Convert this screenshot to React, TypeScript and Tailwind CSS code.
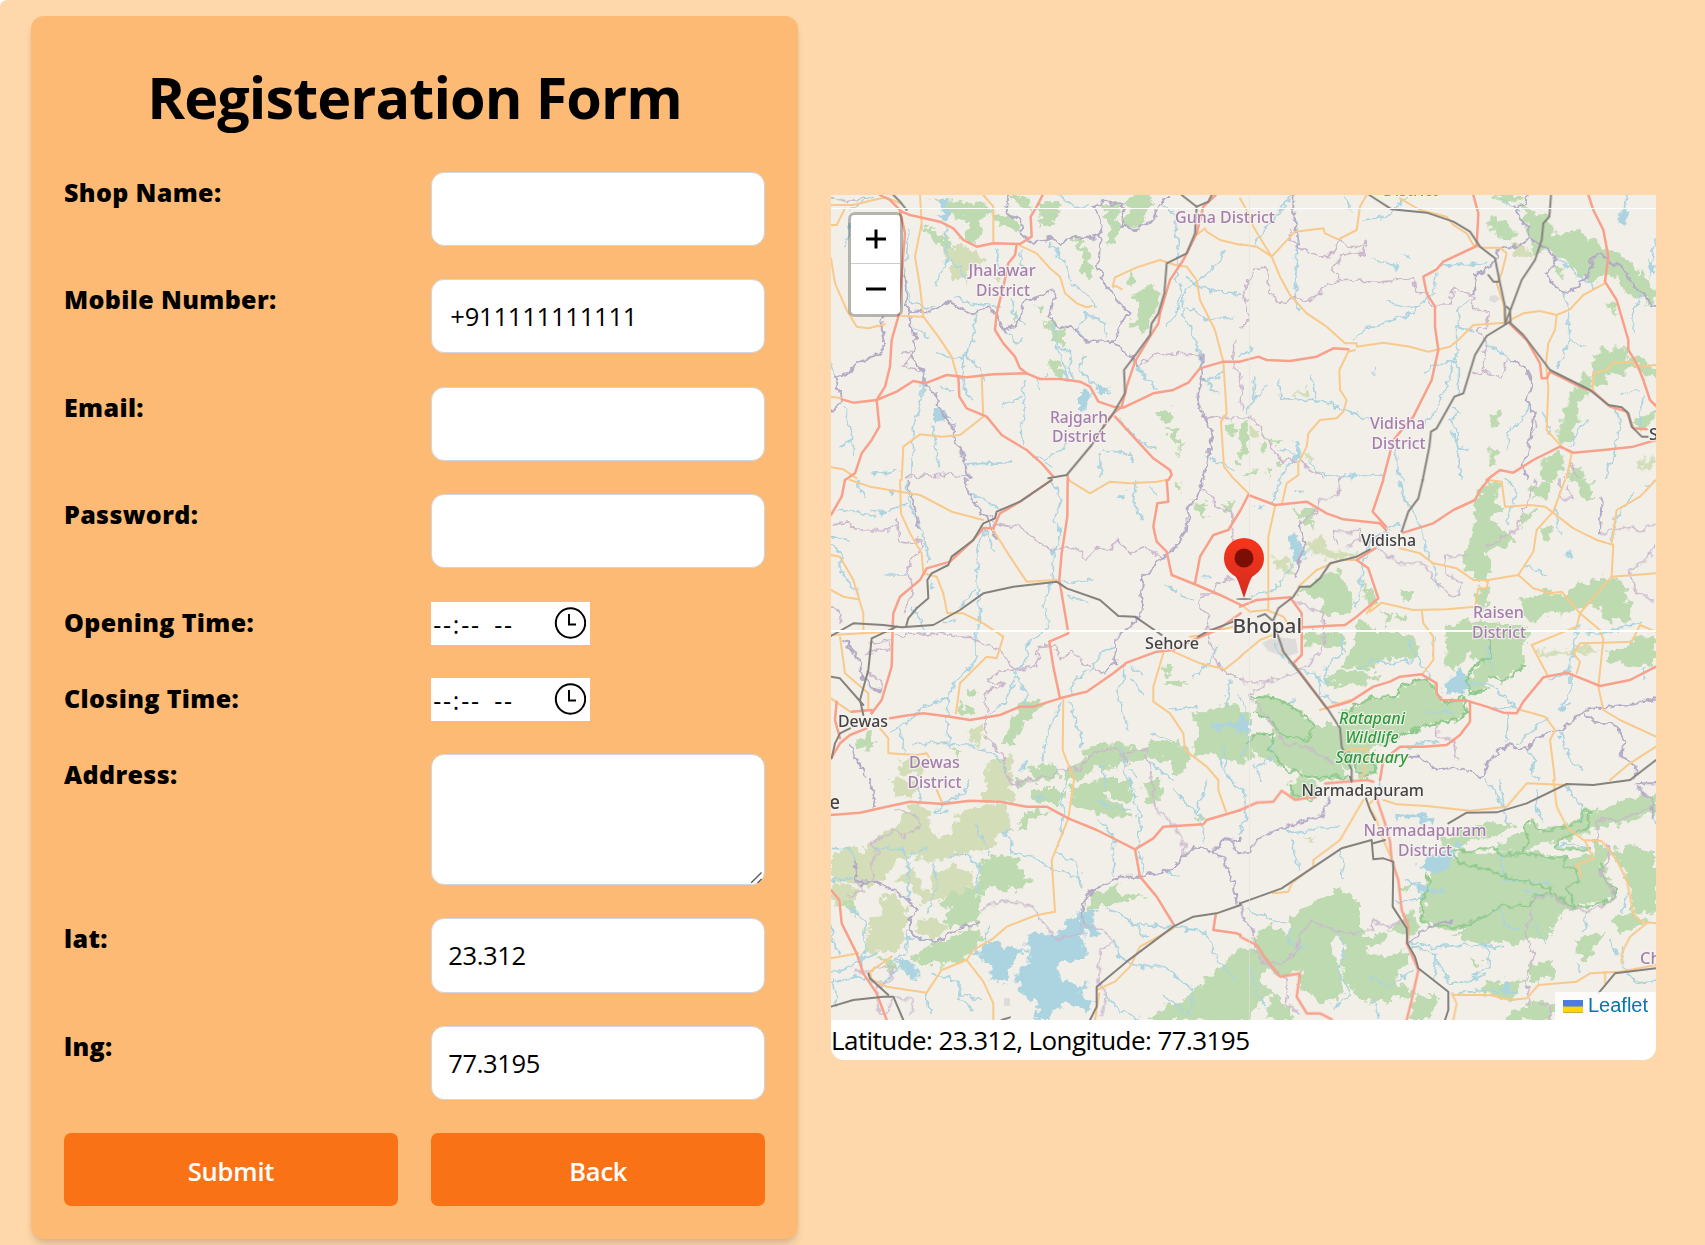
import React from "react";

type Panel = "A" | "B" | "C" | "D" | "E" | "F";
type Features = Record<Panel, string[]>;

// The map is drawn in six sheets, each with three drawing units per pixel.
const origin: Record<Panel, string> = {
  A: "translate(820 180) scale(.33333)",
  B: "translate(1240 180) scale(.33333)",
  C: "translate(820 480) scale(.33333)",
  D: "translate(1240 480) scale(.33333)",
  E: "translate(820 780) scale(.33333)",
  F: "translate(1240 780) scale(.33333)",
};

const forest: Features = {
  A: [
    "330,45 360,60 410,62 500,75 520,100 475,125 490,150 460,190 425,170 445,130 400,105 370,80",
    "520,105 560,98 610,140 600,160 560,140 525,130", "570,45 620,45 638,90 605,88",
    "650,80 700,60 722,90 700,145 655,130 665,105", "300,130 345,150 395,190 385,212 325,172",
    "845,65 900,70 895,170 870,205 858,195 875,140 850,95", "930,45 992,45 985,95 950,155 912,130 925,85",
    "755,170 785,175 800,215 830,270 800,298 780,270 788,220", "925,265 945,290 940,330 925,300",
    "940,345 1000,310 1020,350 975,460 925,445 950,410", "665,420 735,450 735,490 700,485 695,450",
    "688,540 715,550 728,595 690,585", "645,370 675,380 660,408", "1010,700 1050,685 1060,715 1030,730",
    "1040,750 1075,740 1080,785 1098,795 1080,800 1072,830 1065,790", "570,410 590,400 585,425",
    "1215,735 1245,730 1250,760 1230,765", "1252,740 1275,725 1285,780 1280,830 1255,840 1262,800", "1325,785 1345,800 1325,820", "1345,770 1390,785 1370,795",
    "1245,850 1262,845 1255,870", "1270,880 1310,865 1300,890", "1345,860 1362,870 1342,892", "1385,835 1395,850 1375,858",
  ],
  B: [
    "745,45 850,48 850,65 800,70", "745,105 800,125 830,150 825,180 780,175 750,150",
    "840,70 880,95 930,110 940,165 1000,150 1050,170 1115,215 1180,255 1248,330 1248,380 1200,350 1160,340 1120,280 1090,290 1060,310 1020,290 960,240 940,210 880,225 860,140",
    "930,262 975,260 960,290", "1095,380 1120,370 1140,410", "1060,530 1090,500 1110,515 1150,490 1160,530 1200,525 1248,580 1248,600 1180,560 1150,590 1110,570 1100,620 1060,610",
    "1030,570 1055,590 1050,650 1015,665 1010,740 975,800 950,770 980,670", "1248,690 1180,725 1200,750 1248,720",
    "745,705 780,695 785,730 755,745", "750,800 770,805 765,855 748,860", "910,830 970,810 975,850 940,900 895,900",
    "990,860 1040,880 1030,900 990,900",
  ],
  C: [
    "1105,50 1130,75 1165,65 1150,85 1165,115 1150,110", "1205,75 1240,60 1230,95 1215,90", "1065,5 1085,10 1080,30 1065,20", "1025,560 1060,560 1055,580 1030,590",
    "1020,615 1075,595 1105,605 1070,622", "610,665 675,665 650,695 620,720 575,795 545,795 575,730",
    "110,780 155,750 163,790 135,812 108,800", "435,620 470,630 460,650", "415,670 460,690 470,705 420,695",
    "625,860 690,850 720,880 690,900 640,900", "730,880 760,850 800,840 790,810 850,790 900,785 910,800 985,810 980,840 930,845 900,860 840,860 780,895 740,905",
    "975,785 1060,780 1100,810 1120,850 1070,890 1050,880 1050,840 985,835",
    "1120,700 1160,700 1230,670 1262,690 1262,850 1235,850 1180,820 1110,825 1135,770", "395,800 425,820 415,840",
  ],
  D: [
    "155,80 185,100 200,85 230,95 215,115 215,150 190,115 170,125", "725,20 780,0 765,60 795,90 750,110 780,150 830,185 740,210 755,270 720,310 665,245 700,150 705,80",
    "840,95 890,90 830,150", "870,20 940,0 925,50 880,60", "900,150 940,140 920,190", "1010,0 1050,0 1060,60 1020,50",
    "175,335 230,300 285,270 325,300 330,350 345,385 310,405 240,400 255,360", "365,300 400,330 410,360 385,380",
    "430,390 460,410 440,440", "345,430 380,430 400,455 490,460 545,500 530,530 420,540 400,570 300,560 345,500",
    "190,460 300,455 320,520 290,490 200,500", "250,590 330,570 420,590 360,620 260,610",
    "620,440 690,420 800,430 850,445 880,450 845,500 860,560 820,580 790,605 750,590 740,630 690,640 680,600 720,555 690,520 640,570 620,560",
    "840,360 930,330 970,345 1040,305 1090,290 1150,310 1170,380 1160,430 1100,420 1070,370 1000,395 930,400 870,430 845,400",
    "1090,520 1150,500 1190,475 1248,470 1248,560 1170,560 1120,550",
    "40,650 110,655 180,695 220,735 300,735 305,700 390,655 470,650 480,620 560,595 590,640 620,670 670,650 680,700 650,720 560,735 470,775 400,800 410,880 370,895 340,870 300,850 330,900 200,890 130,860 60,830 20,790 50,760 100,770 90,720 45,700",
    "480,330 520,340 500,375", "-10,680 30,700 30,770 40,830 0,850", "720,320 750,330 735,395 705,370", "470,410 500,395 490,430",
  ],
  E: [
    "580,0 640,0 600,25", "625,30 740,30 720,75 640,65",
    "750,20 840,0 935,0 930,70 890,60 860,30 840,45 940,100 920,115 850,105 760,80",
    "970,0 1025,0 1025,70 980,60", "620,90 690,95 640,115 620,150 585,150", "490,235 560,222 600,240 595,275 645,300 590,335 520,325 475,340 475,425 380,440 370,400 400,390 360,370 400,340 470,320",
    "300,510 370,480 440,450 480,445 492,480 440,530 370,560 310,550 275,540", "64,370 100,360 105,405", "160,535 215,535 225,575",
    "810,350 905,305 890,340 985,345 880,378 840,375 800,400", "985,720 1030,685 1100,655 1150,610 1262,500 1262,720", "1130,100 1150,120 1135,125",
  ],
  F: [
    "145,20 180,-15 215,-5 240,30 190,55 155,45", "600,180 650,155 740,130 830,130 790,165 700,180 630,210",
    "770,190 850,150 870,110 905,155 960,140 1020,110 1040,80 1055,100 1150,60 1248,45 1248,90 1180,120 1100,140 950,185 900,190 850,220 780,215",
    "640,230 700,210 780,220 870,215 980,235 1060,225 1080,265 1110,310 1130,350 1020,385 960,400 940,440 920,470 870,470 830,490 740,485 700,490 635,470 670,450 550,430 545,350 570,300 560,250",
    "1060,180 1120,210 1180,200 1248,220 1248,400 1180,400 1165,300 1130,235 1100,230 1100,280 1070,250",
    "150,410 220,365 300,325 360,370 360,450 390,470 430,455 450,475 380,510 420,530 500,510 510,550 470,570 470,610 530,650 390,665 340,640 305,570 310,490 285,460 268,490 300,560 315,640 250,670 180,630 180,580 110,590 90,560 60,600 100,640 150,680 160,720 80,720 90,640 70,650 30,720 0,720 0,500 40,510 40,470 90,435 150,460",
    "440,450 510,390 540,430 520,470", "485,320 515,310 500,335", "1110,410 1180,400 1220,430 1140,455", "1010,475 1100,460 1060,500 1040,545 1010,520",
    "870,550 935,540 940,590 870,610", "530,640 600,650 570,720 510,720", "680,540 730,550 710,565", "740,600 800,610 860,590 820,660 720,640", "810,700 900,660 945,680 930,720 800,720", "1180,600 1230,600 1210,612",
  ],
};

const scrub: Features = {
  A: ["370,195 440,200 490,240 495,252 450,262 440,310 400,290", "515,290 540,290 535,310", "1290,740 1325,745 1310,780 1290,770"],
  B: ["810,190 860,205 880,230 830,225", "165,640 210,620 205,645 175,650", "190,820 225,825 210,840", "1185,845 1240,830 1230,880"],
  C: ["240,840 290,830 310,880 235,885", "495,860 520,845 570,830 575,900 490,900", "440,760 490,730 480,800"],
  D: ["205,180 255,175 260,210 340,215 360,225 290,240 200,215", "100,230 150,245 170,290 110,260", "890,510 960,515 1050,500 1085,515 960,525 895,525"],
  E: [
    "215,0 290,0 285,50 230,50", "505,0 565,0 585,60 480,65",
    "33,240 90,195 130,215 160,180 240,130 270,70 320,90 330,160 400,170 410,105 460,80 550,70 585,150 540,160 500,210 440,220 400,225 350,245 290,235 240,230 200,290 180,310 130,315 60,305 33,290",
    "230,295 280,262 300,320 340,335 330,280 400,260 455,280 460,320 380,350 300,370 275,320", "190,345 225,350 265,380 260,430 240,500 215,520 130,515 145,430 185,400",
    "300,415 360,420 385,450 345,475 280,450", "33,310 130,330 80,380 33,360",
  ],
  F: ["190,170 220,175 205,182"],
};

const water: Features = {
  A: ["362,55 390,60 385,125 362,115", "780,630 808,640 800,692 780,690", "340,690 375,690 395,725 360,720 345,740", "825,615 865,630 845,645"],
  B: ["1130,95 1165,90 1160,140 1140,130", "1225,240 1248,260 1240,285 1222,265", "385,570 410,565 400,590", "250,665 300,672 285,685", "460,255 480,262 470,270", "165,780 175,785 185,835 160,835", "500,218 515,232 500,235"],
  C: ["895,45 915,35 910,65", "150,100 185,95 185,112", "325,300 350,320 335,325", "1150,295 1170,290 1165,305", "590,855 620,855 610,870", "1170,732 1240,724 1290,722 1290,748 1190,745"],
  D: ["155,165 185,185 210,225 160,245 170,210 140,205", "970,225 1000,218 990,240", "610,610 640,590 660,560 680,600 690,610 670,640 610,640", "0,715 25,720 30,745 0,760", "138,662 160,662 150,675", "170,25 183,30 175,42", "45,70 75,75 60,90"],
  E: [
    "780,400 835,385 820,430 850,470 790,460 790,500 800,540 710,550 725,590 770,620 810,610 780,640 820,670 800,690 740,670 700,690 690,720 635,720 660,680 610,640 585,600 590,570 630,550 620,480 640,450 700,470 740,430",
    "460,520 530,480 560,500 620,510 580,540 560,610 510,600 520,560", "230,535 290,560 295,600 250,580", "545,148 578,150 560,160", "650,45 685,55 670,65",
  ],
  F: ["530,255 600,215 640,205 640,250 600,280 560,275", "500,310 550,320 620,335 560,345", "465,85 490,105 540,95 575,120 575,140 530,115 480,115", "785,610 805,600 805,640 785,640", "650,180 680,190 660,210"],
};

const rivers: Features = {
  A: [
    "155,45 120,70 90,90", "140,110 95,130 75,200", "380,130 380,240 345,320", "385,240 420,260 430,290", "470,400 460,480 435,530 425,590 430,620 455,660", "435,525 480,560 490,600",
    "270,150 250,290 275,370 340,385", "705,205 735,250 750,300 800,345 825,375", "530,210 535,280", "605,210 600,250 640,280", "575,360 580,400 615,430", "700,430 710,500 735,560 745,600", "550,450 590,490 610,470", "760,600 745,560 755,520 710,500",
    "800,400 775,450 790,470", "800,400 850,430 855,470", "715,45 780,90 805,75", "1025,70 1065,110 1075,220 1070,300", "1210,210 1200,240 1150,290 1090,340 1085,400 1110,440 1140,520 1145,590 1190,640", "1085,310 1070,400 1040,430",
    "1100,290 1140,325 1200,335 1260,340", "1100,380 1160,420 1240,410", "620,600 605,630 620,680 600,750 610,790", "545,680 600,650", "310,570 305,650 280,740 275,895", "340,730 355,860", "75,680 100,790 100,830", "33,545 65,660",
    "440,855 490,850 570,848", "630,820 700,860", "670,840 720,810 740,790", "845,810 930,820 940,850", "840,820 840,890", "900,720 960,790 1005,805", "950,560 1010,630", "1145,600 1200,590 1210,570", "155,880 230,875", "60,800 100,780", "690,190 720,230", "430,540 350,520", "280,440 325,470", "360,620 400,630", "410,350 450,370 540,380", "1170,835 1240,870", "640,590 660,620", "790,530 780,570 830,620 870,640",
  ],
  B: [
    "155,45 130,80 80,140 45,190", "165,120 170,220 165,370 178,395", "320,55 333,90", "400,235 475,262", "500,50 440,110 370,120", "600,262 680,250 740,250", "590,280 585,340 530,380 520,400 450,425 390,440 345,480", "440,365 480,378 535,380",
    "690,360 660,380 650,440 650,520 625,600 590,690 545,750", "550,575 600,548 640,545 655,560 655,640", "740,490 810,540", "985,395 990,480 950,565", "990,480 1035,500", "1248,180 1225,290", "1210,340 1180,390 1185,460", "970,330 985,390",
    "950,230 1010,280 1070,325", "780,60 840,90", "1160,48 1155,90", "45,590 40,650 20,700", "115,605 120,655 250,665 340,700 400,725", "215,585 230,655", "40,660 85,620", "635,680 660,700 630,720 655,760 650,820 665,890", "865,670 860,700 805,760 805,810",
    "635,750 655,800 685,808", "1050,720 1015,750 990,800", "1125,680 1140,740 1120,830 1100,870 1100,900", "1140,645 1200,630", "1210,640 1200,730", "0,530 35,505", "470,790 470,860 490,900", "210,840 230,880 320,890", "170,830 120,890 100,970", "120,810 160,820", "330,890 400,880 430,895", "910,700 930,760", "655,440 700,455",
  ],
  C: [
    "260,0 270,80 310,160 325,240", "33,190 60,220 60,270 110,340", "50,90 120,100 160,105", "180,100 260,70", "110,0 130,50", "495,150 475,200 470,290 480,400 465,490 465,550 400,610 385,660 380,720 390,800", "690,0 725,60 700,130 725,150 700,220 700,300 670,370 685,440 625,490 620,540 585,580 580,620 550,670 510,700",
    "950,0 940,60 965,118", "730,310 820,300", "745,345 800,370", "445,40 500,60 540,90", "490,140 520,210", "990,20 1010,50", "1030,315 1070,335", "590,590 620,640 610,680", "880,500 840,520 820,570 770,590 750,640", "920,550 905,610 890,640 925,750",
    "930,560 970,580", "930,600 970,640", "725,665 690,740 665,840", "750,670 780,760 785,800", "385,650 310,680 260,730 210,760", "240,750 250,820", "280,790 380,790 450,795 520,820 560,870", "195,285 260,285", "280,380 320,460", "370,430 400,420", "1190,500 1160,560 1120,595", "1230,600 1220,680", "1130,680 1050,690",
    "930,870 950,900", "990,850 1060,900", "33,170 90,180", "210,45 220,30", "460,330 420,380", "1210,800 1220,870", "1080,345 1120,360", "840,850 860,900 850,920", "900,800 920,880 945,930", "990,760 1060,785",
  ],
  D: [
    "475,0 490,50 540,130 560,210 585,270 595,330", "480,130 395,180 370,240 360,330 345,380", "800,0 830,30 800,130", "945,80 950,140 965,165", "860,255 920,285", "1180,40 1130,110 1115,190", "300,460 310,520 250,570 260,610 220,580", "100,490 160,560 240,590 240,640 300,680",
    "500,480 550,560 570,590", "585,470 580,530", "160,250 100,330 30,350", "680,610 740,610 780,640 830,680 760,690", "990,580 990,640 960,690 990,670", "805,700 800,780", "920,710 860,770 830,790", "1010,440 1000,520 980,580 930,600", "1210,560 1210,600", "0,650 20,690 0,730", "100,770 100,830 50,860", "860,810 890,840 870,870 900,900",
    "960,760 1000,850 1030,870", "350,570 400,540 450,550 520,540", "1200,430 1080,460 1040,455", "560,690 640,700", "500,800 590,785", "750,480 740,530 760,570", "0,700 30,790 0,830", "1240,0 1220,20", "40,850 60,900", "-60,830 -50,870 10,940",
  ],
  E: [
    "450,0 430,40 370,70 345,100", "375,95 345,100", "300,60 295,30", "460,125 500,190 505,220", "560,150 580,220 660,240 700,270 780,295", "735,0 725,60 730,110 715,200", "710,215 770,250 785,320", "835,120 880,170 880,290", "930,0 960,110 955,190 970,280", "830,60 870,80 930,90",
    "1060,30 1140,110 1155,190", "1030,270 1080,290", "33,205 90,210 110,240", "33,300 100,295", "160,205 250,205 265,260 265,350", "260,230 320,205", "380,230 440,225 475,260 470,340", "345,250 350,320 320,400", "90,380 135,430 135,500 120,560", "33,440 40,500 60,520", "260,450 260,520 220,540 290,600", "33,580 90,560 170,520",
    "33,610 100,590 190,610 240,560", "40,600 50,680", "320,640 330,700", "330,580 420,605 420,660 460,690", "860,390 900,400 930,430 1050,440 1160,455 1190,540 1245,600", "930,420 985,475", "880,480 900,530 940,560 1030,560 1120,630", "1120,620 1110,700", "850,640 900,690 960,715", "1030,650 1100,700", "420,640 480,660", "1160,0 1130,100", "260,470 340,485", "500,440 500,500",
  ],
  F: [
    "10,30 20,100 0,170", "130,140 160,160 290,135", "155,180 180,275", "300,200 310,290", "420,0 425,40", "20,390 140,430", "150,440 150,490 200,510", "300,460 310,530 290,570 330,640 280,690", "490,300 540,310", "470,370 560,350", "520,500 580,520 600,560 630,610 690,600 740,580",
    "510,490 580,500 700,495 790,500", "590,520 580,600", "640,640 750,630 830,640", "780,380 790,440 840,450", "1160,340 1150,400", "1040,390 1030,460", "780,0 800,130", "740,0 790,80", "890,30 890,90 910,125", "980,20 1020,70 1030,120", "780,220 790,300 930,310", "950,200 1000,190 1050,210",
    "850,330 920,345", "1150,500 1150,560 1190,610 1248,600", "880,440 920,490", "740,500 750,560 700,590", "1110,480 1130,530", "30,560 50,640", "390,590 440,620 520,570", "400,660 420,720", "1010,550 1030,580", "60,650 80,690", "1240,100 1248,130",
  ],
};

const borders: Features = {
  A: [
    "565,45 560,100 600,120 605,160 640,190 700,175 720,195 760,170 820,175 845,160", "870,480 935,530 950,558", "265,390 275,460 290,470 275,530 310,570 312,620 350,640 355,680 400,740 405,780 430,830 445,890", "33,695 65,660 45,590 85,585 110,550 195,510 185,450 190,410",
    "1145,530 1145,600 1130,660 1150,710 1180,755 1165,820 1150,900",
    "1045,45 1010,80 1000,120 950,150 910,140 905,75 850,65 820,80 845,130 835,260 850,310 900,370 930,405 900,430 890,480 800,488 765,445 710,435 690,410 705,330 650,350 610,370 590,440 550,450 530,405 505,385 455,400 380,365 340,395 265,390 250,290",
  ],
  B: [
    "160,45 160,110 175,200", "860,45 855,70 825,80 840,120 865,140 860,180 820,200 770,215 760,250 705,290 700,340", "860,165 920,205 950,235 920,275 935,310 975,340 1015,320 1050,275 1055,235 1080,220 1110,245 1150,265 1185,320 1215,345 1230,375 1248,378",
    "810,540 860,560 880,610 860,660 880,700 870,790 850,850 860,900",
  ],
  C: ["265,0 285,90 300,150", "440,0 445,45 490,100 530,180", "1145,0 1130,60 1100,90 1105,140 1060,210 1020,240 970,290 960,410 890,470 885,550 850,580", "70,480 120,540 125,590 180,640", "90,800 140,890"],
  D: ["1085,50 1080,160", "1248,655 1180,670 1030,690 970,750 890,770 860,810 800,795 740,850 730,890 640,860 590,870 540,830 500,830", "180,130 190,190 170,290", "1030,700 1060,725 1130,735 1150,780 1145,830 1190,860 1180,890"],
  E: ["150,0 165,80", "105,245 110,310 170,305 260,355 290,390 270,420 270,450 300,480 360,480 440,435 480,430", "1262,180 1245,180 1215,175 1175,215 1125,200 1095,225 1050,270 960,290 900,290 800,345 785,400 790,430", "1175,215 1215,230 1220,260 1240,310 1250,370"],
  F: ["270,50 245,110 150,135 50,175 30,215 -5,220 -25,180", "0,370 10,410 45,460", "1240,120 1235,60 1190,20", "510,490 560,440 640,420", "33,-1020", "1248,10 1190,10"],
};

const districts: Features = {
  A: ["250,520 280,515 250,560 310,570", "950,558 1000,525 1100,520 1145,530", "720,195 760,170 830,180", "33,55 80,65 140,50", "1245,480 1240,560 1262,590 1265,690", "1150,710 1300,715 1325,750 1360,810 1390,845 1440,840 1480,880 1520,895", "260,890 400,885 450,890"],
  B: [
    "175,205 260,235 295,185 355,205 380,182 370,220 310,225 275,270 310,298 430,305 520,295 530,335 560,345 570,375 630,375 640,325 705,350 700,385 745,395 740,440 710,450 740,490 725,580 700,575", "150,145 150,180 175,200", "0,440 30,420 10,330 50,262 85,270 85,340 120,370 165,350 210,365 260,320 300,298",
    "730,570 785,598 800,540", "1010,890 990,850 970,890", "880,690 890,740 860,800",
  ],
  C: [
    "33,135 90,125 110,150 200,150 235,125 235,185 270,190 300,175 310,200 260,260 280,330 250,400", "530,130 600,140 660,190 700,210 770,205 800,240 830,200 870,210 890,180 930,220 980,200 1020,235", "230,465 360,460 440,470 540,510 585,570 650,560 655,500 700,495 720,540 755,515 790,550 850,580",
    "585,570 535,575 500,605 550,610 495,640 500,690", "1140,30 1180,45 1185,80 1235,100 1240,200", "1240,290 1190,310 1180,345 1140,345 1140,385 1170,400 1160,440 1195,560 1262,600", "150,490 210,480 205,510 140,520", "140,580 185,600 180,640 150,620", "500,700 495,770 550,830 560,890 590,920", "590,920 620,895 700,890 710,870 780,865 820,820 880,800 920,850 910,820 980,810 990,880", "480,100 520,110 530,180", "33,380 70,400 60,430",
  ],
  D: [
    "150,360 250,400 250,500 200,560 110,600 20,610 0,590", "410,200 480,250 550,250 600,320 645,350 670,310 615,280 615,230 680,225", "285,190 280,150 330,160 360,140 360,180 320,200", "740,200 830,150 850,90 890,0", "960,0 960,50 1000,60 980,10", "1080,160 1160,140 1200,155 1248,130", "1248,195 1220,240 1165,270 1190,340 1240,360", "30,650 110,750 130,790 200,800 280,850", "590,730 590,770 640,780 650,840", "30,645 90,600", "305,-8 290,45 235,60 225,100 180,130",
  ],
  E: [
    "220,85 280,100 300,140 250,170 220,150 150,190 175,220 155,250 160,300", "110,310 130,330 80,350", "990,-20 1010,90 1060,130 1095,200 1090,225", "480,390 550,360 630,375 680,440 710,480 780,460 790,430 850,450 880,480 840,520 835,600 860,650 840,710", "100,575 150,575 160,560 220,560 215,600 170,620 175,700 200,700 220,650 280,660 270,710", "585,10 640,0",
  ],
  F: [
    "45,465 50,520 90,550 130,550 175,500 180,460 220,425 320,465 400,450 400,420 440,440 500,420", "50,530 145,600 140,670 180,700", "1070,180 1075,120 1130,120 1160,110 1240,85", "1100,190 1110,240 1080,280 1130,350 1060,390 1000,390 940,345 880,355 870,420 850,460 880,520 860,600 870,670", "930,720 935,680 900,670",
  ],
};

const secondary: Features = {
  A: [
    "300,45 305,130 285,230 300,320 310,410 355,470 395,530 412,590", "490,45 520,80 520,190", "600,197 650,220 690,265 720,290 735,340 770,370 800,382 815,378", "1262,195 1200,180 1160,155 1155,145 1130,165", "33,235 45,310 80,390 110,440 145,445 195,433", "245,408 310,410", "485,590 490,710 420,765 365,770 300,763 250,800 245,900",
    "905,328 890,318 878,320 885,292 950,262 1020,240 1065,255 1100,260 1130,300 1140,360 1185,450 1210,545 1220,700 1203,725 1212,860 1240,895 1285,940", "33,75 100,75 160,60 200,52 245,72", "33,650 65,655", "33,862 70,868 110,895", "75,85 50,135 33,135",
  ],
  B: [
    "0,55 20,90 40,140 95,230 120,290 150,345 200,400 260,440 315,490 350,490 350,500 430,488 510,500 565,515 630,500 655,480 700,435 795,428 850,400 900,393 950,405 990,388 1030,345 1095,310", "0,193 50,200 95,230 165,155 250,145 255,160 295,178 350,150 360,80 380,45", "480,55 540,90 620,110 640,135 680,160 700,195 730,203 780,203 800,220 785,280 770,310 790,370 795,420",
    "345,510 325,515 298,570 300,630 320,660 310,695 290,715 240,720 205,760 200,800 175,850 175,885 140,910 125,975", "950,405 945,450 925,490 918,550 925,620 920,750 965,800 995,820 980,895", "1248,555 1190,560 1175,545 1120,548 1100,570 1060,580 1058,630",
  ],
  C: [
    "90,0 150,20 240,35 300,45 395,95 490,120", "240,0 243,100 270,160 305,220 310,280 350,290 370,340 382,400 430,400 490,430 550,470 530,535 500,530 420,610 408,700", "520,150 570,230 620,305 710,300", "745,0 810,40 870,5 930,10 1010,5 1040,0", "33,225 60,230 100,300 130,400 130,460", "33,330 70,350 115,358", "33,465 210,455",
    "60,470 75,580 145,640 145,690 90,695 33,655", "180,745 205,775 205,820 290,825 320,820 345,860", "730,660 728,810 755,880 762,900", "1030,520 1000,620 1000,665 1050,700 1090,760 1095,810 1160,860 1195,900", "1060,515 1140,550 1215,568 1262,530", "1110,470 1150,465 1200,450 1240,440",
  ],
  D: [
    "105,80 85,170 85,390", "480,205 540,220 580,250 650,265 700,300 745,300 835,285 880,215 890,150 940,95 975,0", "745,0 785,5 795,80 870,75 915,80 935,95 1000,145 1070,180 1120,195 1115,290 1248,280", "1248,0 1200,50 1130,90 1115,190", "835,285 880,325 930,340 965,335 1020,400 1080,450 1090,480 1075,620 1090,690 1140,720 1248,770",
    "1115,290 1020,400 1010,440 875,495 925,590", "745,300 740,325 715,325 705,380 620,388 520,390 425,368 390,395", "545,390 550,430 580,470 580,540 545,585", "1248,455 1200,435 1175,485 1090,488 1020,490 1000,520 1020,545 1010,580", "835,688 915,710 945,750 930,780 945,900", "1248,800 1170,850 1110,900", "5,375 30,395 80,390 130,410 150,440", "0,530 60,480 110,460", "175,320 230,270 300,240 350,240", "320,810 380,805 370,890", "405,365 380,400",
    "125,510 160,555", "240,690 330,660",
  ],
  E: ["350,30 368,72", "762,0 745,115 715,190 695,240 705,395 650,405 560,440 520,475 460,510 440,540 365,570 320,638 200,620 155,598 150,575 215,530", "440,540 490,605 520,670 520,720", "1195,0 1195,30 1218,95", "33,535 115,520", "1060,445 960,500 930,560 885,605 830,630", "838,640 825,720"],
  F: [
    "430,60 470,73 560,78 690,92 800,80 860,10 980,15", "370,60 300,180 220,240 220,260 155,310 145,335 100,340", "405,55 385,75 410,120 430,180 450,225", "940,0 950,80 980,140 1030,180 1085,183 1130,240 1160,300 1180,400 1200,425 1248,430", "1220,430 1170,470 1145,520 1145,550", "1035,183 1060,235 1010,255 1025,290", "635,640 650,670 640,720", "640,645 750,645 810,660 860,655 895,615 1010,605 1050,580 1140,575 1248,555", "1095,575 1095,610",
  ],
};

const primary: Features = {
  A: [
    "180,45 210,60 245,95 270,105 360,125 400,145 430,180 470,200 520,190 600,192 635,170 632,110 650,80 668,45", "590,195 585,225 565,250 550,320 530,400 525,450 550,490 585,530 600,565 620,580", "240,95 255,160 250,220 235,410 215,480 210,560 195,620 170,660 178,740 155,780 125,820 105,880 75,900",
    "65,658 100,668 170,660 230,635 280,603 315,610 380,585 440,592 520,583 620,580 660,597 720,597 780,605 810,620 835,665 880,680 910,683 1000,640 1060,630 1105,608 1140,565 1210,545 1260,545", "415,588 418,650 440,685 500,710 545,765 620,810 665,850 700,890", "1187,45 1150,80 1130,160 1090,240 1050,300 1020,400 1015,430 990,470 945,545 920,620 905,680 880,700 850,740",
    "885,710 940,770 1000,835 1050,870 1055,885 1045,900", "745,900 742,885",
  ],
  B: [
    "0,545 55,530 80,540 150,543 230,530 280,505 325,508", "700,45 715,100 710,198 610,245 590,268 550,290 560,340 585,380 585,440 595,510 575,600 520,710 460,780 430,895", "1045,45 1060,90 1090,150 1105,230 1095,305 1130,360 1165,480 1165,510 1190,550 1210,600 1230,660 1248,678", "810,432 860,480 900,550 905,595 920,595 930,575 1020,620 1060,635 1110,680 1160,695 1180,745 1220,748",
    "740,900 780,870 820,878 880,840 960,800 1000,818 1090,810 1180,800 1248,780",
  ],
  C: [
    "75,0 65,50 33,105", "695,0 600,65 540,100 520,145 490,145 455,185 390,245 320,265 300,300 240,350 220,400 218,440 215,560 185,660 155,700", "743,0 742,110 725,220 718,300 735,400 745,460 688,485 700,560 720,655", "155,700 155,690 95,695", "210,715 250,708 310,700 390,710 450,720 540,705 600,680 640,680 720,655 800,635 880,580 920,548 1010,515 1060,510 1120,480 1200,445 1262,400",
    "1040,0 1045,65 1012,70 1000,140 1010,185 1040,215 1055,285 1130,315 1200,345 1262,375", "1285,45 1262,90 1225,150 1180,165 1140,230 1125,310", "140,745 90,765 60,790 33,835", "50,665 45,720 60,775",
  ],
  D: [
    "25,45 105,75 200,65 260,100 310,118 420,130 438,150", "430,0 398,95 438,140", "745,0 720,30 705,60 640,90 580,130 490,158", "405,205 350,240 385,265 415,355 350,410 315,435 190,442", "0,380 50,360 150,352 185,400 185,525 160,550 260,685", "260,685 330,665 400,620 450,605 480,590 545,583 590,610 590,640 605,660 680,662 740,680 790,698 830,700 850,665 910,592 980,578 1080,618 1170,600 1248,560",
    "690,665 690,725 660,765 620,795 550,800 480,800 430,840 420,900",
  ],
  E: ["33,105 120,98 200,80 270,65 370,72 450,62 540,65 620,80 680,80 745,115 830,150 890,180 945,208 960,290 1010,350 1062,435", "945,208 1000,175 1030,140 1150,133 1160,120 1262,90", "33,330 58,360 65,430 110,520 130,580 170,640 200,720", "1187,405 1180,450 1250,460 1262,465"],
  F: ["0,90 50,68 100,65 125,32 165,60 225,50", "0,470 50,495 80,540 120,590 180,580 170,650 200,700 240,700 275,718", "410,55 435,130 450,185 455,240 475,300 485,390 505,440 500,490 535,570 515,660 500,720", "255,10 380,0 400,5"],
};

const rails: Features = {
  A: ["220,45 240,65 260,90", "1085,45 1130,80", "1175,45 1165,65 1130,80 1125,160 1100,220 1040,250 1033,340 1015,400 995,430 990,465 935,540 912,570 915,640 880,700 850,740 815,795 740,885 685,895"],
  B: ["388,45 455,88 560,98 640,125 690,155 720,200 765,235 778,300 795,380 795,432", "745,285 760,305 775,305", "933,45 928,110 910,130 905,180 885,240 845,300 815,380 795,432", "800,380 810,390 812,430 850,465 930,570 1050,630 1105,675 1145,682 1165,700 1175,740 1205,770 1225,770", "810,425 740,468 705,525 670,640 643,650 590,745 573,755 568,800 548,900"],
  C: ["695,0 600,65 530,95 525,115 490,130 460,180 395,230 385,255 335,280 322,300 325,355 290,385 265,415 258,440", "33,468 100,430 190,435 245,442 340,435 420,390 490,340 580,320 710,305 740,325 840,360 895,408 945,410 1025,465", "230,440 155,475 145,570 120,660 130,705", "33,590 60,595 130,675", "90,745 60,760 45,790 35,835", "1135,470 1160,455 1240,425"],
  D: ["548,0 535,55 505,95 485,155", "390,208 350,230 270,250 240,295 210,320 180,320 160,350 115,385 100,420 115,470 130,515 180,580 265,690 300,745 305,800 335,870 335,900", "1248,840 1170,900", "55,410 75,402 95,420"],
  E: ["33,680 100,660 190,650 220,650 250,720", "145,580 150,595 205,645", "810,720 830,680 830,620 920,545 1060,440 1120,410 1190,400 1262,375", "545,720 570,712"],
  F: ["330,-10 335,5", "378,55 390,90 405,120", "0,370 125,325 215,265 305,205 395,180 400,238 430,235 460,245 458,380 500,445 502,490 525,530 535,565 625,635 625,690 615,720", "400,190 435,180", "625,130 680,98 770,97 860,70 980,12 1060,15 1170,0", "1248,565 1125,580 1075,640"],
};

const parkEdges: Features = {
  A: [], B: [], C: [], E: [],
  D: ["305,700 390,655 470,650 480,620 560,595 590,640 620,670 670,650 680,700 650,720 560,735 470,775", "40,650 110,655 180,695 220,735 205,780 120,760 100,730 45,700", "20,790 50,760 100,770 90,810 130,860 200,890 330,890", "750,590 790,605 850,560", "750,480 750,530 700,560 680,600 690,640 740,630", "320,810 350,870 375,890 410,870 390,830"],
  F: ["640,210 680,215 760,205 780,225 850,220 980,235 970,255 1010,270 1020,300 980,325 1005,385", "640,230 660,250 720,262 810,295 935,325 930,340 885,345 870,370", "870,375 780,378 740,405 660,445 570,435 548,425 545,360 570,310 560,275", "850,215 865,180 855,140 870,115 905,155 960,145 1020,120 1030,85 1050,95 1045,145 990,165 950,185 950,205 1050,210", "1080,250 1085,290 1125,330 1125,350 1080,370 1005,385 940,340", "150,10 160,45 210,60 240,45"],
};

const places: { t: string; x: number; y: number; w: number; k: "district" | "town" | "park"; s?: number }[] = [
  { t: "District", x: 1383, y: 196, w: 55, k: "district" },
  { t: "Guna District", x: 1175, y: 222.7, w: 100, k: "district" },
  { t: "Jhalawar", x: 968.5, y: 276, w: 67, k: "district" },
  { t: "District", x: 976, y: 295.5, w: 54, k: "district" },
  { t: "Rajgarh", x: 1050, y: 422.5, w: 58, k: "district" },
  { t: "District", x: 1052, y: 442, w: 54, k: "district" },
  { t: "Vidisha", x: 1370, y: 429.3, w: 55, k: "district" },
  { t: "District", x: 1371.5, y: 449, w: 54, k: "district" },
  { t: "Sagar", x: 1649, y: 439.5, w: 46, k: "town" },
  { t: "Vidisha", x: 1361, y: 546, w: 55, k: "town" },
  { t: "Bhopal", x: 1232.5, y: 633.3, w: 69.5, k: "town", s: 20.5 },
  { t: "Sehore", x: 1145, y: 648.7, w: 54, k: "town" },
  { t: "Dewas", x: 838, y: 726.7, w: 50, k: "town" },
  { t: "Dewas", x: 909, y: 768.3, w: 51, k: "district" },
  { t: "District", x: 907.5, y: 788, w: 54, k: "district" },
  { t: "e", x: 829.5, y: 808.5, w: 10.5, k: "town", s: 19 },
  { t: "Raisen", x: 1473, y: 618.3, w: 51, k: "district" },
  { t: "District", x: 1472, y: 637.7, w: 54, k: "district" },
  { t: "Ratapani", x: 1339, y: 724, w: 66, k: "park" },
  { t: "Wildlife", x: 1345.5, y: 743.3, w: 53, k: "park" },
  { t: "Sanctuary", x: 1335.5, y: 763, w: 72.5, k: "park" },
  { t: "Narmadapuram", x: 1301.5, y: 795.7, w: 122.5, k: "town" },
  { t: "Narmadapuram", x: 1363.5, y: 836, w: 123, k: "district" },
  { t: "District", x: 1398, y: 855.7, w: 54, k: "district" },
  { t: "Chh", x: 1640, y: 964, w: 31, k: "district" },
];

const placeClass = {
  district: "fill-[#a57fab] font-medium",
  town: "fill-[#444444] font-medium",
  park: "fill-[#2f9a3c] font-medium italic",
};

function Layer({ data, closed, className, filter, dash }: { data: Features; closed?: boolean; className: string; filter?: string; dash?: string }) {
  return (
    <g className={className} filter={filter} strokeDasharray={dash} strokeLinejoin="round" strokeLinecap="round">
      {(Object.keys(data) as Panel[]).map((p) => (
        <g key={p} transform={origin[p]}>
          {data[p].map((d, i) => (
            <path key={i} d={`M${d}${closed ? "Z" : ""}`} />
          ))}
        </g>
      ))}
    </g>
  );
}

function MapCanvas() {
  return (
    <svg viewBox="831 195 825 825" className="block h-[825px] w-[825px]">
      <defs>
        <filter id="ragged" filterUnits="userSpaceOnUse" x="820" y="180" width="850" height="850" colorInterpolationFilters="sRGB">
          <feTurbulence type="fractalNoise" baseFrequency="0.12" numOctaves="3" seed="4" />
          <feDisplacementMap in="SourceGraphic" scale="15" xChannelSelector="R" yChannelSelector="G" />
        </filter>
        <filter id="wavy" filterUnits="userSpaceOnUse" x="820" y="180" width="850" height="850" colorInterpolationFilters="sRGB">
          <feTurbulence type="fractalNoise" baseFrequency="0.13" numOctaves="2" seed="9" />
          <feDisplacementMap in="SourceGraphic" scale="9" xChannelSelector="R" yChannelSelector="G" />
        </filter>
        <linearGradient id="pin" x1="0" y1="0" x2="0" y2="1">
          <stop offset="0" stopColor="#f5361a" />
          <stop offset="1" stopColor="#d52b22" />
        </linearGradient>
      </defs>
      <rect x="831" y="195" width="825" height="825" className="fill-[#f2efe9]" />
      <Layer data={scrub} closed className="fill-[#d3deb9]" filter="url(#ragged)" />
      <Layer data={forest} closed className="fill-[#bddab1]" filter="url(#ragged)" />
      <g className="fill-[#dddcda]">
        <path d="M1262 643l12 -6 22 2 2 14 -14 4 -16 -6zM1490 296l6 -1 4 4 -6 4 -5 -3zM1004 998h6v8h-6z" />
      </g>
      <Layer data={rivers} className="fill-none stroke-[#abd4e0] stroke-[5]" filter="url(#wavy)" />
      <Layer data={water} closed className="fill-[#abd4e0]" filter="url(#ragged)" />
      <Layer data={parkEdges} className="fill-none stroke-[#8fc98c] stroke-[6]" filter="url(#wavy)" />
      <Layer data={districts} className="fill-none stroke-[#cbb7cc] stroke-[5]" filter="url(#wavy)" dash="16 5" />
      <Layer data={borders} className="fill-none stroke-[#b3aac5] stroke-[6]" filter="url(#wavy)" />
      <Layer data={secondary} className="fill-none stroke-[#f8c98a] stroke-[6]" />
      <Layer data={primary} className="fill-none stroke-[#f9a08a] stroke-[7.5]" />
      <Layer data={rails} className="fill-none stroke-[#85827e] stroke-[6]" />
      <path d="M831 208.5H1656" className="stroke-white stroke-1" />
      <path d="M831 631H1656" className="stroke-white stroke-2" />
      <path d="M1249.5 195V1020" className="stroke-[#e4e1dc] stroke-[.6]" />
      <g className="[font-family:'Noto_Sans',sans-serif] stroke-[#f6f3f0]/80 stroke-[2.5]" style={{ paintOrder: "stroke" }}>
        {places.map((p, i) => (
          <text key={i} x={p.x} y={p.y} textLength={p.w} lengthAdjust="spacingAndGlyphs" fontSize={p.s ?? 16.5} className={placeClass[p.k]}>
            {p.t}
          </text>
        ))}
      </g>
      <ellipse cx="1244" cy="599" rx="8" ry="1" className="fill-black/40" />
      <path d="M1244 538a20 20 0 0 0 -20 20c0 8 4 14 11.500 18.500c2.500 3 4.500 10 8.500 21.500c4 -11.500 6 -18.500 8.500 -21.500c7.500 -4.500 11.500 -10.500 11.500 -18.500a20 20 0 0 0 -20 -20z" fill="url(#pin)" />
      <circle cx="1244" cy="558" r="9.5" className="fill-[#7b0f06]" />
    </svg>
  );
}

function ShopMap() {
  return (
    <div className="w-[825px] overflow-hidden rounded-b-[13px] bg-white">
      <div className="relative">
        <MapCanvas />
        <div className="absolute top-[17px] left-[17px] w-[55px] rounded-[7px] border-[3px] border-black/25 bg-clip-padding">
          <div className="grid h-[49px] place-items-center rounded-t-[4px] border-b border-[#ccc] bg-white">
            <svg viewBox="0 0 20 20" className="size-5 stroke-black stroke-[3]"><path d="M0 10H20M10 0.500V19.500" /></svg>
          </div>
          <div className="grid h-[50px] place-items-center rounded-b-[4px] bg-white">
            <svg viewBox="0 0 20 20" className="size-5 stroke-black stroke-[3]"><path d="M0 10H20" /></svg>
          </div>
        </div>
        <div className="absolute right-0 bottom-0 flex h-7 w-[101px] items-center gap-[5px] bg-white/80 pl-2 text-[20px] leading-7 text-[#0078A8] [font-family:'Liberation_Sans',sans-serif]">
          <svg viewBox="0 0 20 13" className="h-[13px] w-5"><path d="M0 0h20v13H0z" fill="#4C7BE1" /><path d="M0 6.500h20v6H0z" fill="#FFD500" /><path d="M0 12.500h20v.5H0z" fill="#E0BC00" /></svg>
          <span className="-mt-0.5">Leaflet</span>
        </div>
      </div>
      <p className="h-10 text-[26px] leading-[41px] tracking-[-0.57px] whitespace-nowrap">Latitude: 23.312, Longitude: 77.3195</p>
    </div>
  );
}

function Label({ children }: { children: React.ReactNode }) {
  return <label className="text-[25px] leading-10 font-black tracking-[0.37px] whitespace-nowrap">{children}</label>;
}

function Field({ value = "", type = "text", className = "px-4 tracking-[-0.35px]" }: { value?: string; type?: string; className?: string }) {
  return (
    <input type={type} defaultValue={value} className={`h-full w-full rounded-[13px] border border-gray-300 bg-white text-[25.5px] outline-none ${className}`} />
  );
}

function TimeField() {
  return (
    <div className="flex h-[43px] w-[159px] items-center bg-white pr-1 pl-[2px]">
      <span className="w-[61px] pt-0.5 text-[25px] leading-9 tracking-[1.75px] whitespace-pre">--:--</span>
      <span className="flex-1 pt-0.5 text-[25px] leading-9 tracking-[1.75px]">--</span>
      <svg viewBox="0 0 32 32" className="size-8 fill-none stroke-black stroke-2"><circle cx="16.500" cy="16" r="14.700" /><path d="M15 7V17.500H22" /></svg>
    </div>
  );
}

export default function App() {
  return (
    <div className="h-[1245px] w-[1705px] overflow-hidden bg-white text-black [font-family:'Open_Sans','Noto_Sans',sans-serif]">
      <main className="flex h-full items-start gap-[33px] rounded-tl-[7px] bg-[#fed7aa] pt-4 pl-[31px]">
        <form className="h-[1223px] w-[767px] shrink-0 rounded-[13px] bg-[#fdba74] px-[33px] pt-[33px] shadow-[0_7px_10px_-2px_rgba(0,0,0,0.12),0_3px_7px_-3px_rgba(0,0,0,0.12)]">
          <h1 className="h-[122.5px] pt-[13px] text-center text-[57.500px] leading-[70px] font-bold tracking-[-0.9px] whitespace-nowrap">Registeration Form</h1>
          <div className="grid grid-cols-[334px_334px] grid-rows-[74.3px_74.3px_74.3px_74.3px_42.700px_42.700px_131.500px_74.300px_74.300px_73px] gap-[33.25px]">
            <Label>Shop Name:</Label>
            <Field />
            <Label>Mobile Number:</Label>
            <Field value="+911111111111" className="px-[18px] tracking-[-0.2px]" />
            <Label>Email:</Label>
            <Field />
            <Label>Password:</Label>
            <Field type="password" />
            <Label>Opening Time:</Label>
            <TimeField />
            <Label>Closing Time:</Label>
            <TimeField />
            <Label>Address:</Label>
            <div className="relative">
              <textarea className="block h-full w-full resize-none rounded-[13px] border border-gray-300 bg-white outline-none" />
              <svg viewBox="0 0 11 11" className="absolute right-[3px] bottom-[2px] size-[11px] fill-none stroke-[#555] stroke-[1.3]"><path d="M0 11L10.500 .5M6.500 11L10.500 7" /></svg>
            </div>
            <Label>lat:</Label>
            <Field value="23.312" />
            <Label>lng:</Label>
            <Field value="77.3195" />
            <button type="button" className="rounded-[7px] bg-[#f97316] pt-0.5 text-[25.5px] font-semibold tracking-[-0.2px] text-white">Submit</button>
            <button type="button" className="rounded-[7px] bg-[#f97316] pt-0.5 text-[25.5px] font-semibold tracking-[-0.2px] text-white">Back</button>
          </div>
        </form>
        <div className="pt-[179px]">
          <ShopMap />
        </div>
      </main>
    </div>
  );
}
